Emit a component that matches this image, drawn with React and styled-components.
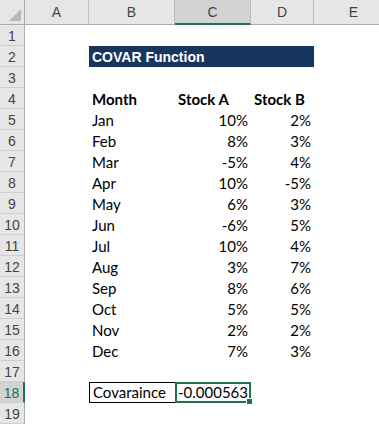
import React from "react";
import styled, { createGlobalStyle, css } from "styled-components";

const Global = createGlobalStyle`
  html, body { margin: 0; padding: 0; background: #fff; overflow: hidden; }
  #root { width: 379px; height: 425px; overflow: hidden; }
`;

const Sheet = styled.div`
  display: grid;
  grid-template-columns: 25px 64px 86px 76px 63px 80px;
  grid-template-rows: 25px repeat(19, 21px);
  width: 379px;
  overflow: hidden;
  font-family: "Lato", "Open Sans", sans-serif;
`;

const Corner = styled.div`
  position: relative;
  background: #e6e6e6;
  border-right: 1px solid #ababab;
  border-bottom: 1px solid #ababab;
  box-sizing: border-box;
  &::after {
    content: "";
    position: absolute;
    right: 3px;
    bottom: 3px;
    width: 0;
    height: 0;
    border-left: 12px solid transparent;
    border-bottom: 12px solid #b8b8b8;
  }
`;

const ColHead = styled.div`
  box-sizing: border-box;
  display: flex;
  align-items: center;
  justify-content: center;
  background: ${(p) => (p.$active ? "#d2d2d2" : "#e6e6e6")};
  border-right: 1px solid #bcbcbc;
  border-bottom: ${(p) => (p.$active ? "2px solid #217346" : "1px solid #ababab")};
  color: #444;
  font-family: "Liberation Sans", "Open Sans", sans-serif;
  font-size: 14px;
  padding-top: ${(p) => (p.$active ? "1px" : "0")};
`;

const RowHead = styled.div`
  box-sizing: border-box;
  display: flex;
  align-items: center;
  justify-content: center;
  background: ${(p) => (p.$active ? "#d2d2d2" : "#e6e6e6")};
  border-right: ${(p) => (p.$active ? "2px solid #217346" : "1px solid #ababab")};
  border-bottom: 1px solid #d0d0d0;
  color: ${(p) => (p.$active ? "#217346" : "#444")};
  font-family: "Liberation Sans", "Open Sans", sans-serif;
  font-size: 14px;
  padding-top: 1px;
`;

const Cell = styled.div`
  position: relative;
  box-sizing: border-box;
  display: flex;
  align-items: flex-end;
  justify-content: ${(p) => (p.$right ? "flex-end" : "flex-start")};
  padding: 0 3px 1px 3px;
  font-size: 15px;
  color: #000;
  white-space: nowrap;
  font-weight: ${(p) => (p.$bold ? 700 : 400)};
  ${(p) =>
    p.$boxed &&
    css`
      border: 1px solid #000;
      border-right: none;
    `}
  ${(p) =>
    p.$selected &&
    css`
      border: 2px solid #217346;
      padding: 0 1px 0 1px;
      &::after {
        content: "";
        position: absolute;
        right: -4px;
        bottom: -4px;
        width: 5px;
        height: 5px;
        background: #217346;
        border: 1px solid #fff;
      }
    `}
`;

const Title = styled.div`
  grid-column: span 3;
  background: #17365d;
  color: #fff;
  display: flex;
  align-items: center;
  padding: 1px 3px 0;
  font-family: "Liberation Sans", Arial, sans-serif;
  font-weight: 700;
  font-size: 14px;
`;

const cols = ["A", "B", "C", "D", "E"];

const data = [
  ["Jan", "10%", "2%"],
  ["Feb", "8%", "3%"],
  ["Mar", "-5%", "4%"],
  ["Apr", "10%", "-5%"],
  ["May", "6%", "3%"],
  ["Jun", "-6%", "5%"],
  ["Jul", "10%", "4%"],
  ["Aug", "3%", "7%"],
  ["Sep", "8%", "6%"],
  ["Oct", "5%", "5%"],
  ["Nov", "2%", "2%"],
  ["Dec", "7%", "3%"],
];

function Row({ n, children }) {
  return (
    <>
      <RowHead $active={n === 18}>{n}</RowHead>
      {children}
    </>
  );
}

const Empty = () => <Cell />;

export default function App() {
  const rows = [];
  for (let n = 1; n <= 19; n++) {
    let content;
    if (n === 2) {
      content = (
        <>
          <Empty />
          <Title>COVAR Function</Title>
          <Empty />
        </>
      );
    } else if (n === 4) {
      content = (
        <>
          <Empty />
          <Cell $bold>Month</Cell>
          <Cell $bold>Stock A</Cell>
          <Cell $bold>Stock B</Cell>
          <Empty />
        </>
      );
    } else if (n >= 5 && n <= 16) {
      const d = data[n - 5];
      content = (
        <>
          <Empty />
          <Cell>{d[0]}</Cell>
          <Cell $right>{d[1]}</Cell>
          <Cell $right>{d[2]}</Cell>
          <Empty />
        </>
      );
    } else if (n === 18) {
      content = (
        <>
          <Empty />
          <Cell $boxed>Covaraince</Cell>
          <Cell $right $selected>-0.000563</Cell>
          <Empty />
          <Empty />
        </>
      );
    } else {
      content = (
        <>
          <Empty />
          <Empty />
          <Empty />
          <Empty />
          <Empty />
        </>
      );
    }
    rows.push(
      <Row key={n} n={n}>
        {content}
      </Row>
    );
  }
  return (
    <>
      <Global />
      <Sheet>
        <Corner />
        {cols.map((c) => (
          <ColHead key={c} $active={c === "C"}>
            {c}
          </ColHead>
        ))}
        {rows}
      </Sheet>
    </>
  );
}
